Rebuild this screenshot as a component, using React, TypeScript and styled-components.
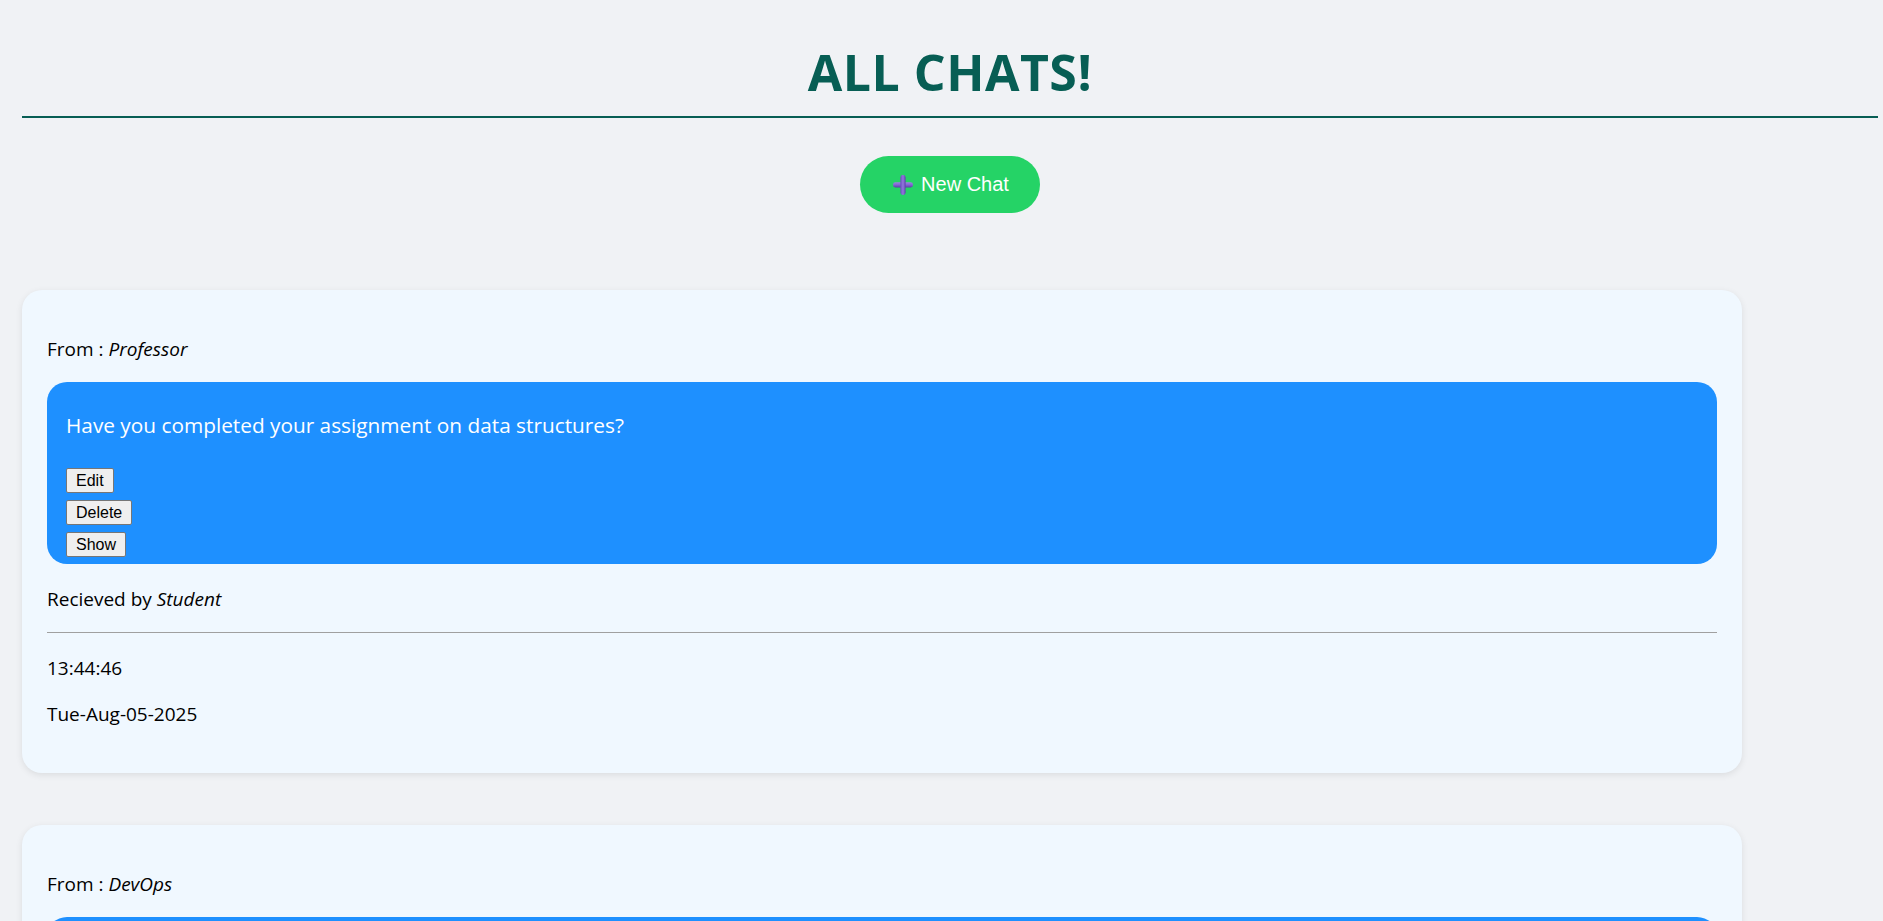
import React from "react";
import styled, { createGlobalStyle } from "styled-components";

const GlobalStyle = createGlobalStyle`
  html, body {
    margin: 0;
    padding: 0;
    background: #f0f2f5;
  }
  body {
    font-family: "Open Sans", "Noto Sans", sans-serif;
    color: #000;
  }
`;

const Page = styled.div`
  padding: 0 5px 0 22px;
`;

const Title = styled.h1`
  margin: 42px 0 0;
  line-height: 60px;
  font-size: 50px;
  font-weight: 700;
  letter-spacing: 0.5px;
  text-align: center;
  color: #075e54;
`;

const Divider = styled.div`
  height: 2px;
  margin-top: 14px;
  background: #075e54;
`;

const ButtonRow = styled.div`
  display: flex;
  justify-content: center;
  margin-top: 38px;
`;

const NewChatButton = styled.button`
  display: flex;
  align-items: center;
  gap: 8px;
  height: 57px;
  padding: 0 31px 0 33px;
  border: none;
  border-radius: 29px;
  background: #25d366;
  color: #fff;
  font-family: "Liberation Sans", Arial, sans-serif;
  font-size: 20px;
  cursor: pointer;
`;

const ChatList = styled.div`
  display: flex;
  flex-direction: column;
  gap: 52px;
  margin-top: 77px;
  padding-bottom: 40px;
`;

const Card = styled.div`
  box-sizing: border-box;
  width: 1720px;
  padding: 47px 25px 46px;
  background: #f0f8ff;
  border-radius: 20px;
  box-shadow: 0 2px 7px rgba(0, 0, 0, 0.09);
`;

const Meta = styled.p<{ $top?: number }>`
  margin: ${(p) => p.$top ?? 0}px 0 0;
  font-size: 19px;
  line-height: 25px;
`;

const Name = styled.em`
  font-style: italic;
`;

const Bubble = styled.div`
  margin-top: 20px;
  padding: 29px 19px 7px;
  background: #1e90ff;
  border-radius: 20px;
  color: #fff;
`;

const Message = styled.p`
  margin: 0;
  font-size: 20.8px;
  line-height: 28px;
`;

const Actions = styled.div`
  display: flex;
  flex-direction: column;
  align-items: flex-start;
  gap: 7px;
  margin-top: 29px;
`;

const ActionButton = styled.button`
  box-sizing: border-box;
  height: 25px;
  padding: 0 9px;
  border: 1px solid #767676;
  border-radius: 2px;
  background: #efefef;
  color: #000;
  font-family: "Liberation Sans", Arial, sans-serif;
  font-size: 16px;
  line-height: 23px;
  cursor: pointer;
`;

const Rule = styled.hr`
  margin: 20px 0 0;
  border: none;
  border-top: 1px solid #a0a0a0;
  height: 0;
`;

const PlusIcon = () => (
  <svg width="20" height="20" viewBox="0 0 20 20" aria-hidden="true">
    <defs>
      <linearGradient id="plusV" x1="0" y1="0" x2="1" y2="0">
        <stop offset="0" stopColor="#6a4cc0" />
        <stop offset="0.5" stopColor="#9279dc" />
        <stop offset="1" stopColor="#5d40ad" />
      </linearGradient>
      <linearGradient id="plusH" x1="0" y1="0" x2="0" y2="1">
        <stop offset="0" stopColor="#9a82e0" />
        <stop offset="0.5" stopColor="#8266d4" />
        <stop offset="1" stopColor="#5a3ea8" />
      </linearGradient>
    </defs>
    <rect x="0" y="7.3" width="20" height="5.2" rx="2.4" fill="url(#plusH)" />
    <rect x="7.4" y="0" width="5.2" height="20" rx="2.4" fill="url(#plusV)" />
  </svg>
);

type Chat = {
  from: string;
  to: string;
  msg: string;
  time: string;
  date: string;
};

const chats: Chat[] = [
  {
    from: "Professor",
    to: "Student",
    msg: "Have you completed your assignment on data structures?",
    time: "13:44:46",
    date: "Tue-Aug-05-2025",
  },
  {
    from: "DevOps",
    to: "Developer",
    msg: "The deployment pipeline has been updated, please check.",
    time: "13:44:46",
    date: "Tue-Aug-05-2025",
  },
];

export default function App() {
  return (
    <>
      <GlobalStyle />
      <Page>
        <Title>ALL CHATS!</Title>
        <Divider />
        <ButtonRow>
          <NewChatButton>
            <PlusIcon />
            New Chat
          </NewChatButton>
        </ButtonRow>
        <ChatList>
          {chats.map((c, i) => (
            <Card key={i}>
              <Meta>
                From : <Name>{c.from}</Name>
              </Meta>
              <Bubble>
                <Message>{c.msg}</Message>
                <Actions>
                  <ActionButton>Edit</ActionButton>
                  <ActionButton>Delete</ActionButton>
                  <ActionButton>Show</ActionButton>
                </Actions>
              </Bubble>
              <Meta $top={23}>
                Recieved by <Name>{c.to}</Name>
              </Meta>
              <Rule />
              <Meta $top={23}>{c.time}</Meta>
              <Meta $top={21}>{c.date}</Meta>
            </Card>
          ))}
        </ChatList>
      </Page>
    </>
  );
}
